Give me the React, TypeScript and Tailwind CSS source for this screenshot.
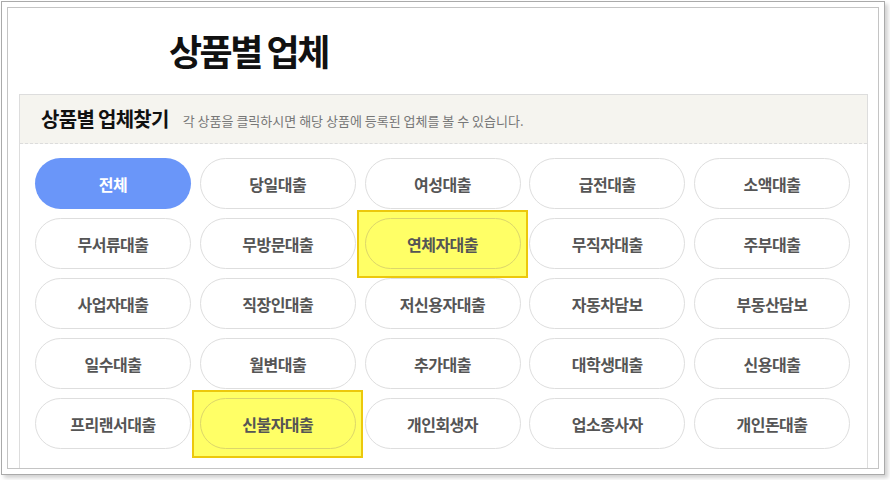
const FONT = "font-['Noto_Sans_CJK_KR','Noto_Sans',sans-serif]";

const items: { label: string; active?: boolean; marked?: boolean }[] = [
  { label: "전체", active: true },
  { label: "당일대출" },
  { label: "여성대출" },
  { label: "급전대출" },
  { label: "소액대출" },
  { label: "무서류대출" },
  { label: "무방문대출" },
  { label: "연체자대출", marked: true },
  { label: "무직자대출" },
  { label: "주부대출" },
  { label: "사업자대출" },
  { label: "직장인대출" },
  { label: "저신용자대출" },
  { label: "자동차담보" },
  { label: "부동산담보" },
  { label: "일수대출" },
  { label: "월변대출" },
  { label: "추가대출" },
  { label: "대학생대출" },
  { label: "신용대출" },
  { label: "프리랜서대출" },
  { label: "신불자대출", marked: true },
  { label: "개인회생자" },
  { label: "업소종사자" },
  { label: "개인돈대출" },
];

function CategoryButton({ label, active, marked }: { label: string; active?: boolean; marked?: boolean }) {
  return (
    <div className={marked ? "relative z-10" : "relative"}>
      {/* yellow marker box drawn over the neighbours */}
      {marked && (
        <div className="absolute -left-[8px] -right-[7px] -top-[8px] -bottom-[9px] border-2 border-[#ecc80c] bg-[#ffff66]" />
      )}
      <button
        className={
          active
            ? "relative flex h-[51px] w-full items-center justify-center rounded-full bg-[#6a96f9] text-[16px] font-bold tracking-[-0.5px] text-white"
            : marked
            ? "relative flex h-[51px] w-full items-center justify-center rounded-full border border-[#dcd66a] bg-transparent text-[16px] font-bold tracking-[-0.5px] text-[#555]"
            : "relative flex h-[51px] w-full items-center justify-center rounded-full border border-[#dedede] bg-white text-[16px] font-bold tracking-[-0.5px] text-[#555]"
        }
      >
        {label}
      </button>
    </div>
  );
}

export default function App() {
  return (
    <div className={`h-[480px] w-[890px] bg-white ${FONT}`}>
      {/* outer frame */}
      <div className="ml-[1px] mt-[1px] flex h-[474px] w-[884px] border border-[#aaaaaa] bg-white p-[5px] shadow-[3px_3px_4px_rgba(0,0,0,0.18)]">
        <div className="flex flex-1 flex-col overflow-hidden border border-[#c4c4c4]">
          <h1 className="ml-[161px] mt-[16px] h-[70px] text-[36px] font-bold leading-[52px] tracking-[-2.5px] text-[#111]">
            상품별 업체
          </h1>

          <div className="ml-[11px] flex w-[849px] flex-1 flex-col border-x border-t border-[#dddddd]">
            <div className="flex h-[49px] items-center border-b border-dashed border-[#dcdcdc] bg-[#f5f4ef] pl-[21px]">
              <h2 className="text-[20px] font-bold tracking-[-0.7px] text-[#111]">상품별 업체찾기</h2>
              <p className="ml-[14px] pt-[3px] text-[13px] tracking-[0px] text-[#777]">
                각 상품을 클릭하시면 해당 상품에 등록된 업체를 볼 수 있습니다.
              </p>
            </div>

            <div className="grid grid-cols-[repeat(5,156px)] gap-x-[8.75px] gap-y-[9px] pl-[15px] pt-[14px]">
              {items.map((it) => (
                <CategoryButton key={it.label} {...it} />
              ))}
            </div>
          </div>
        </div>
      </div>
    </div>
  );
}
